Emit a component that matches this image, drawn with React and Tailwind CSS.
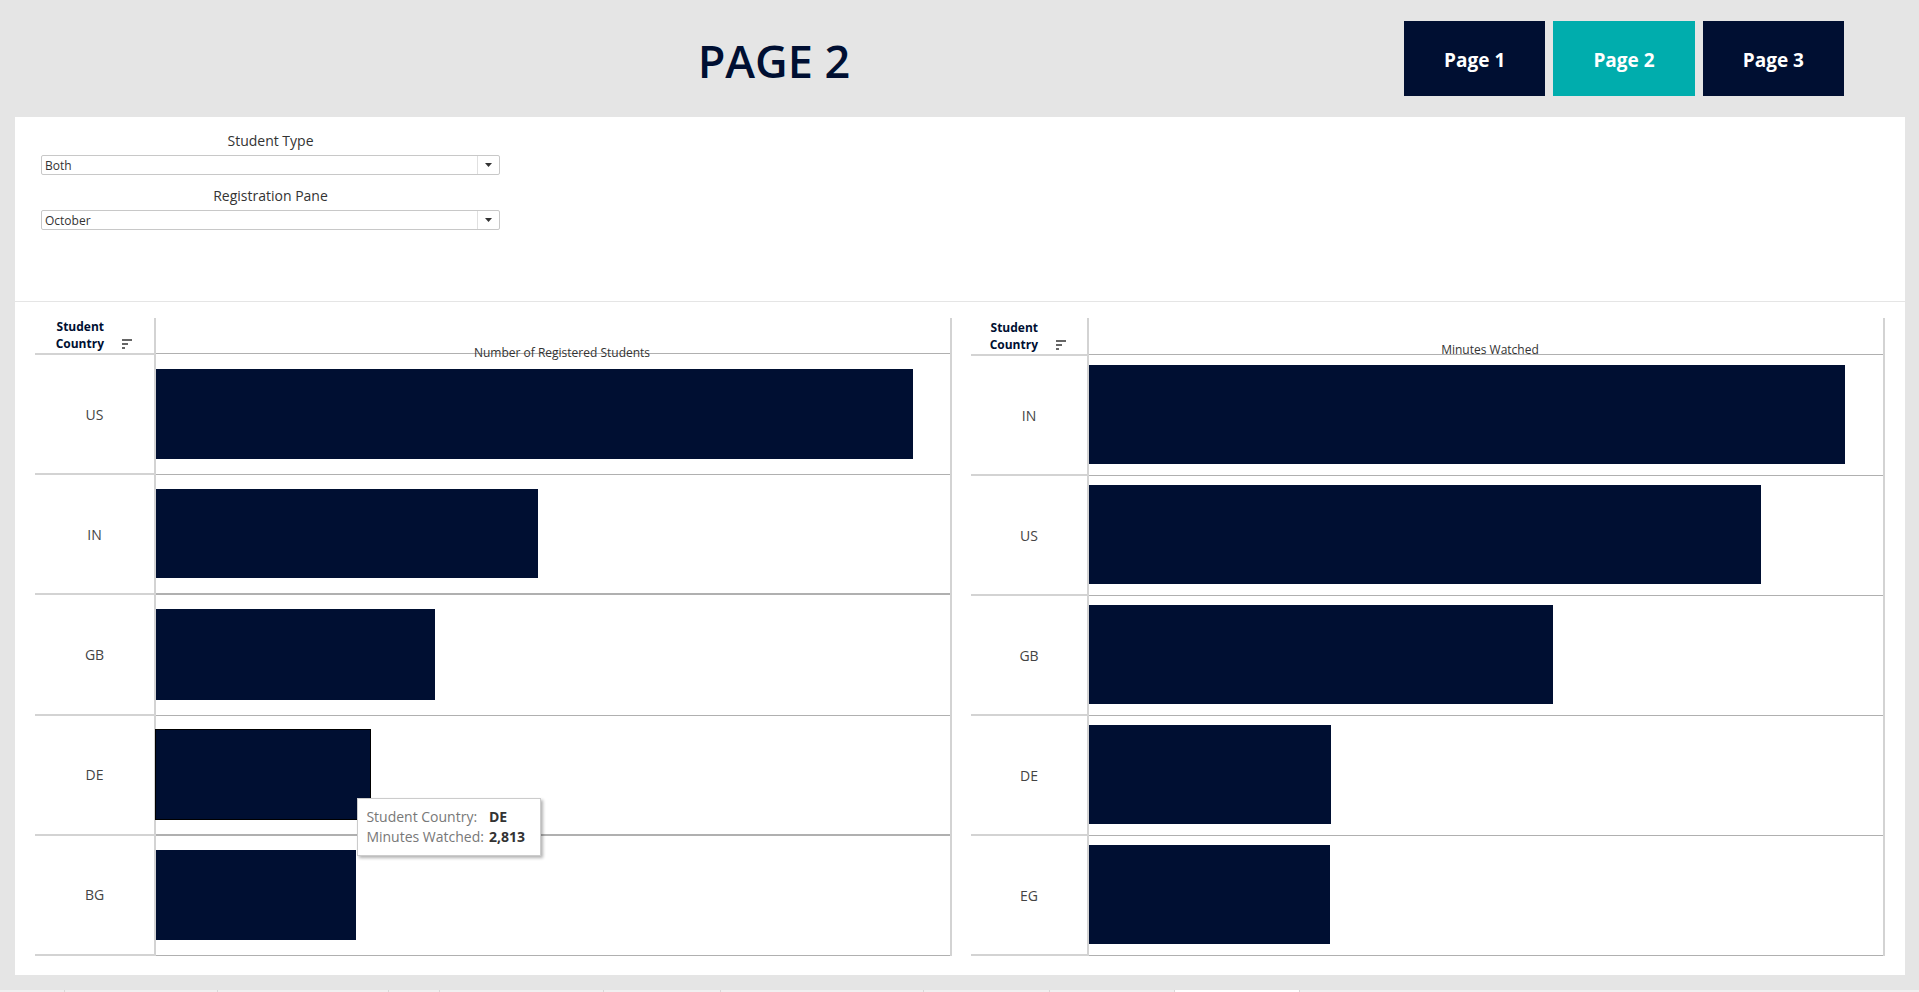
const NAVY = "bg-[#000f32]";

const pages = [
  { name: "Page 1", active: false },
  { name: "Page 2", active: true },
  { name: "Page 3", active: false },
];

const registered = {
  title: "Number of Registered Students",
  rows: [
    { country: "US", share: 95.3 },
    { country: "IN", share: 48.1, heavy: true },
    { country: "GB", share: 35.2 },
    { country: "DE", share: 27, heavy: true, tooltip: "2,813" },
    { country: "BG", share: 25.2 },
  ],
};

const minutes = {
  title: "Minutes Watched",
  rows: [
    { country: "IN", share: 95.2 },
    { country: "US", share: 84.6 },
    { country: "GB", share: 58.5 },
    { country: "DE", share: 30.5 },
    { country: "EG", share: 30.4 },
  ],
};

const sheetTabs = [
  "w-[65px]",
  "w-[153px]",
  "w-[171px]",
  "w-[51px]",
  "w-[164px]",
  "w-[117px]",
  "w-[203px]",
  "w-[126px]",
  "w-[125px]",
  "w-[125px] bg-white",
];

function SortIcon() {
  return (
    <svg viewBox="0 0 10 10" className="h-[10px] w-[10px]" fill="#666666" shapeRendering="crispEdges" aria-hidden="true">
      <rect x="0" y="0" width="10" height="2" />
      <rect x="0" y="4" width="6" height="2" />
      <rect x="0" y="8" width="3" height="2" />
    </svg>
  );
}

function Filter({ id, label, options }) {
  return (
    <div className="flex flex-col">
      <label htmlFor={id} className="text-center text-[14px] leading-6 text-[#333333]">
        {label}
      </label>
      <div className="relative mt-[2px] flex h-5">
        <select
          id={id}
          className="w-full appearance-none rounded-[2px] border border-[#c8c8c8] bg-white pt-[2px] pl-[3px] text-[12px] leading-4 text-[#333333]"
        >
          {options.map((option) => (
            <option key={option}>{option}</option>
          ))}
        </select>
        <span className="pointer-events-none absolute inset-y-px right-px flex w-[22px] items-center justify-center border-l border-[#e0e0e0]">
          <svg viewBox="0 0 7 4" className="h-1 w-[7px]" fill="#333333" aria-hidden="true">
            <path d="M0 0h7L3.500 4z" />
          </svg>
        </span>
      </div>
    </div>
  );
}

function Tooltip({ country, value }) {
  return (
    <div
      role="tooltip"
      className="absolute top-[68px] -right-[171px] z-10 grid w-[184px] grid-cols-[auto_1fr] gap-x-[5px] border border-[#cccccc] bg-white px-2 py-2 text-[14px] leading-5 whitespace-nowrap shadow-[2px_2px_3px_rgba(0,0,0,0.3)]"
    >
      <span className="text-[#787878]">Student Country:</span>
      <span className="font-bold text-[#333333]">{country}</span>
      <span className="text-[#787878]">Minutes Watched:</span>
      <span className="font-bold text-[#333333]">{value}</span>
    </div>
  );
}

function BarChart({ chart, labelCol, headingCol, barPad, titlePos, headerHeight }) {
  return (
    <section className="flex min-w-0 flex-col" aria-label={chart.title}>
      <div className={`flex shrink-0 ${headerHeight}`}>
        <div className={`flex shrink-0 items-end gap-[18px] border-b-2 border-[#d3d3d3] ${labelCol}`}>
          <h2 className={`pb-px text-right text-[12px] leading-[17px] font-bold text-[#000f32] ${headingCol}`}>
            Student Country
          </h2>
          <button type="button" className="mb-1" aria-label="Sort by country">
            <SortIcon />
          </button>
        </div>
        <div className="relative flex-1 border-x-2 border-[#d3d3d3]">
          <div className="absolute inset-x-0 bottom-px h-px bg-[#b0b0b0]" />
          <h3 className={`absolute inset-x-0 text-center text-[12px] leading-4 text-[#333333] ${titlePos}`}>
            {chart.title}
          </h3>
        </div>
      </div>
      {chart.rows.map((row) => (
        <div key={row.country} className="flex min-h-0 flex-1">
          <div
            className={`flex shrink-0 items-center justify-center border-b-2 border-[#d3d3d3] text-[14px] text-[#444444] ${labelCol}`}
          >
            {row.country}
          </div>
          <div className="flex-1 border-x-2 border-[#d3d3d3]">
            <div className={`flex h-full border-[#b0b0b0] ${row.heavy ? "border-b-2" : "border-b"} ${barPad}`}>
              <div
                className={`relative ${NAVY} ${row.tooltip ? "outline-1 outline-black" : ""}`}
                style={{ width: `${row.share}%` }}
              >
                {row.tooltip && <Tooltip country={row.country} value={row.tooltip} />}
              </div>
            </div>
          </div>
        </div>
      ))}
    </section>
  );
}

export default function App() {
  return (
    <div className="flex min-h-screen flex-col bg-[#e5e5e5] font-['Open_Sans','Noto_Sans',sans-serif]">
      <header className="flex h-[117px] shrink-0 items-center justify-end pr-[75px]">
        <h1 className="flex-1 pt-1 pl-[144px] text-center text-[45px] font-semibold text-[#000f32]">PAGE 2</h1>
        <nav className="flex w-[440px] gap-2">
          {pages.map((page) => (
            <button
              key={page.name}
              type="button"
              className={`h-[75px] flex-1 pt-1 text-[19px] font-bold text-white ${page.active ? "bg-[#00adad]" : NAVY}`}
            >
              {page.name}
            </button>
          ))}
        </nav>
      </header>

      <main className="mr-[14px] ml-[15px] flex flex-1 flex-col bg-white">
        <div className="h-[185px] shrink-0 border-b border-[#e5e5e5] pt-3 pl-[26px]">
          <div className="flex w-[459px] flex-col gap-[9px]">
            <Filter id="student-type" label="Student Type" options={["Both", "Free", "Paid"]} />
            <Filter id="registration-pane" label="Registration Pane" options={["October", "November", "December"]} />
          </div>
        </div>
        <div className="grid flex-1 grid-cols-[917fr_914fr] gap-[19px] px-5 pt-4 pb-[19px]">
          <BarChart
            chart={registered}
            labelCol="w-[119px]"
            headingCol="w-[69px]"
            barPad="pt-[14px] pb-[15px]"
            titlePos="top-[27px] pl-[18px]"
            headerHeight="h-[37px]"
          />
          <BarChart
            chart={minutes}
            labelCol="w-[116px]"
            headingCol="w-[67px]"
            barPad="pt-[9px] pb-[11px]"
            titlePos="top-6 pl-2"
            headerHeight="h-[38px]"
          />
        </div>
      </main>

      <footer className="mt-[15px] flex h-[2px] shrink-0 bg-[#f0f0f0]">
        {sheetTabs.map((tab, index) => (
          <div key={index} className={`border-r border-[#d8d8d8] ${tab}`} />
        ))}
      </footer>
    </div>
  );
}
